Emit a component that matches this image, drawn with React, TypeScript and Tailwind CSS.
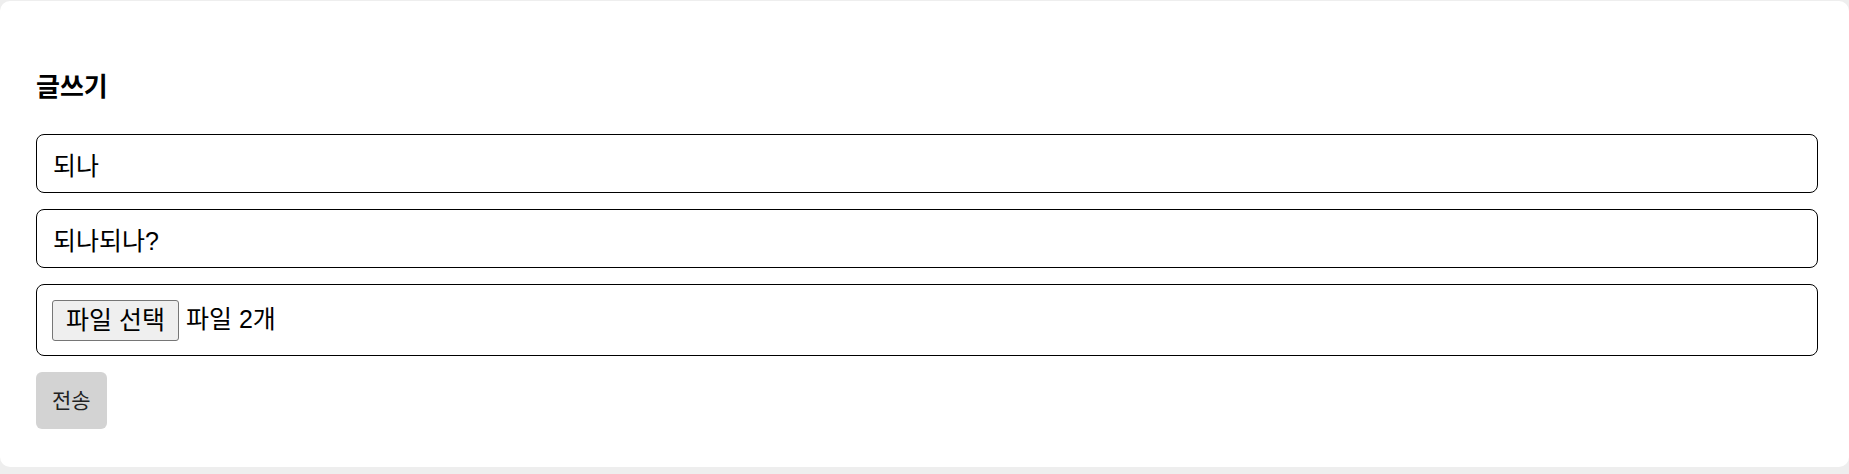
export default function App() {
    return (
        <div
            className="h-[474px] w-full overflow-hidden bg-[#eeeeee] pt-px"
            style={{ fontFamily: '"Liberation Sans", "Noto Sans CJK KR", sans-serif' }}
        >
            <div className="h-[466px] rounded-[10px] bg-white pl-[36px] pr-[31px] pt-[72px]">
                <h3 className="mb-[33px] text-[26px] font-bold leading-[28px] text-black">글쓰기</h3>

                <form className="flex flex-col gap-[16px]" onSubmit={(e) => e.preventDefault()}>
                    <input
                        type="text"
                        defaultValue="되나"
                        className="h-[59px] w-full rounded-[8px] border border-black px-[16px] text-[25px] text-black outline-none"
                    />
                    <input
                        type="text"
                        defaultValue="되나되나?"
                        className="h-[59px] w-full rounded-[8px] border border-black px-[16px] text-[25px] text-black outline-none"
                    />
                    <div className="flex h-[72px] items-center gap-[7px] rounded-[8px] border border-black px-[15px] text-[25px] text-black">
                        <button
                            type="button"
                            className="h-[41px] rounded-[3px] border border-[#767676] bg-[#efefef] px-[13px] text-[25px] leading-none text-black"
                        >
                            파일 선택
                        </button>
                        <span>파일 2개</span>
                    </div>
                    <div>
                        <button
                            type="submit"
                            className="h-[57px] rounded-[6px] bg-[#d3d3d3] px-[16px] text-[21px] text-[#222]"
                        >
                            전송
                        </button>
                    </div>
                </form>
            </div>
        </div>
    );
}
